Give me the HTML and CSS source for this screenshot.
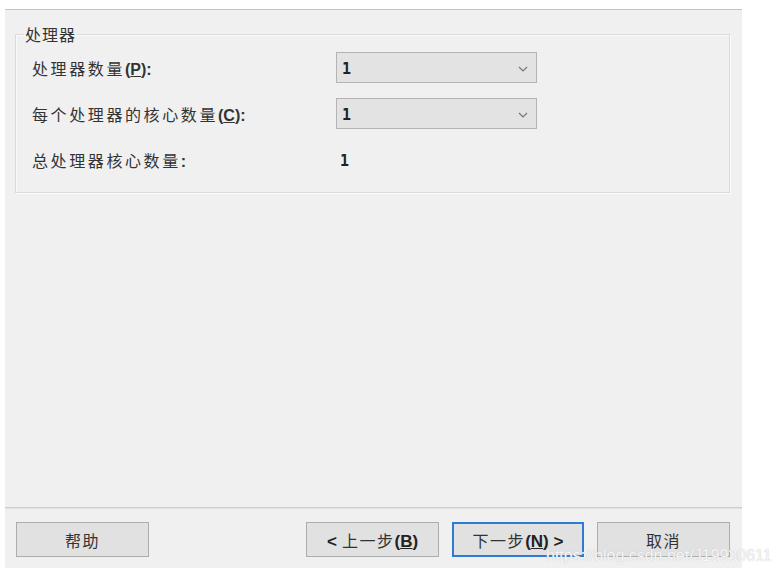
FILE: index.html
```html
<!DOCTYPE html>
<html lang="zh-CN">
<head>
  <meta charset="UTF-8" />
  <meta name="viewport" content="width=device-width, initial-scale=1.0" />
  <title>处理器配置</title>
  <link rel="stylesheet" href="styles.css">
</head>
<body>
  <div class="dialog">
    <div class="content">
      <fieldset class="group">
        <legend>处理器</legend>
        <div class="form">
          <label class="label">处理器数量<span class="lat">(<u>P</u>):</span></label>
          <div class="combo">
            <span class="value">1</span>
            <svg class="arrow" viewBox="0 0 10 6"><polyline points="1,1 5,5 9,1"/></svg>
          </div>

          <label class="label">每个处理器的核心数量<span class="lat">(<u>C</u>):</span></label>
          <div class="combo">
            <span class="value">1</span>
            <svg class="arrow" viewBox="0 0 10 6"><polyline points="1,1 5,5 9,1"/></svg>
          </div>

          <span class="label">总处理器核心数量<span class="lat">:</span></span>
          <span class="value plain">1</span>
        </div>
      </fieldset>
    </div>

    <div class="footer">
      <button class="btn">帮助</button>
      <div class="nav">
        <button class="btn"><span class="lat">&lt;</span> 上一步<span class="lat">(<u>B</u>)</span></button>
        <button class="btn default">下一步<span class="lat">(<u>N</u>) &gt;</span></button>
        <button class="btn">取消</button>
      </div>
    </div>
  </div>

  <!-- 图片水印 -->
  <div class="watermark">https://blog.csdn.net/J19930611</div>
</body>
</html>
```

FILE: styles.css
```css
body {
  margin: 0;
  padding: 9px 0 0 5px;
  background: #fff;
  font-family: "Noto Sans CJK SC", sans-serif;
  color: #333;
}
.dialog {
  width: 737px;
  height: 558px;
  border-top: 1px solid #c4c4c4;
  background: #f0f0f0;
  display: flex;
  flex-direction: column;
}
.content {
  flex: 1;
  padding: 14px 12px 0 10px;
}
.group {
  margin: 0;
  padding: 8px 16px 17px 16px;
  border: 1px solid #dadada;
  box-shadow: inset 1px 1px 0 #fafafa, 1px 1px 0 #fafafa;
}
.group legend {
  margin-left: -8px;
  padding: 0 1px;
  font-size: 16px;
  line-height: 20px;
  letter-spacing: 1px;
}
.form {
  display: grid;
  grid-template-columns: 304px 201px;
  grid-auto-rows: 31px;
  row-gap: 15px;
  align-items: center;
}
.label {
  font-size: 16px;
  letter-spacing: 2.6px;
  white-space: nowrap;
}
.lat {
  font-family: "Liberation Sans", Arial, sans-serif;
  font-weight: bold;
  letter-spacing: 0;
}
.combo {
  height: 29px;
  border: 1px solid #b4b4b4;
  background: #e3e3e3;
  display: flex;
  align-items: center;
  justify-content: space-between;
  padding: 2px 8px 0 5px;
  box-sizing: border-box;
  height: 31px;
}
.value {
  font-family: "DejaVu Sans Mono", monospace;
  font-weight: bold;
  font-size: 15px;
  color: #222;
}
.plain {
  padding: 2px 0 0 4px;
}
.arrow {
  width: 10px;
  height: 6px;
  fill: none;
  stroke: #777;
  stroke-width: 1.2;
}
.footer {
  border-top: 1px solid #cfcfcf;
  box-shadow: inset 0 1px 0 #e2e2e2;
  padding: 14px 12px 11px 11px;
  display: flex;
  align-items: center;
}
.nav {
  margin-left: auto;
  display: flex;
  gap: 13px;
}
.btn {
  width: 133px;
  height: 35px;
  border: 1px solid #adadad;
  background: #e1e1e1;
  font-family: "Noto Sans CJK SC", sans-serif;
  font-size: 16px;
  letter-spacing: 1.5px;
  color: #333;
  padding: 0;
}
.btn .lat {
  font-size: 17px;
  color: #222;
}
.default {
  width: 132px;
  border: 2px solid #2f7bd3;
}
.watermark {
  position: absolute;
  left: 546px;
  top: 547px;
  white-space: nowrap;
  font-family: "Liberation Sans", Arial, sans-serif;
  font-size: 16px;
  color: #f6f6f6;
  text-shadow: 0 0 1px #b8b8b8;
}
```
